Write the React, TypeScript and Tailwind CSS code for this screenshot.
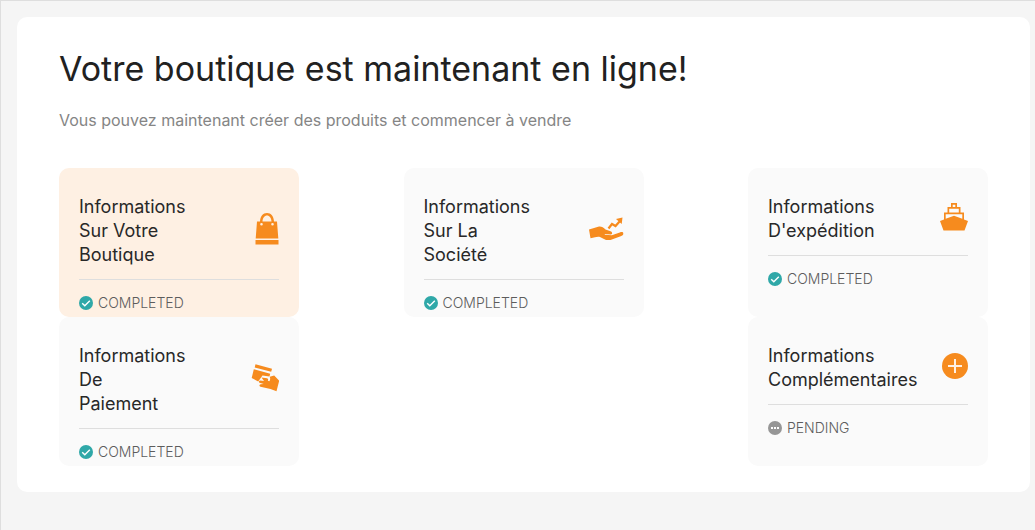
import type { ReactNode } from 'react';

type Status = 'COMPLETED' | 'PENDING';

interface Step {
  id: string;
  lines: string[];
  icon: ReactNode;
  status: Status;
  active?: boolean;
}

const BagIcon = () => (
  <svg width="24" height="32" viewBox="0 0 24 32" fill="#f68b1e" aria-hidden="true">
    <path
      fillRule="evenodd"
      d="M2 8.5h3C5.2 3.3 8 0 12 0s6.8 3.3 7 8.5h3L23.3 25.5H.7zM7.5 8.5h9C16.3 5 14.5 2.6 12 2.6S7.7 5 7.5 8.5zM6.5 10a1.3 1.3 0 1 0 0 2.6 1.3 1.3 0 0 0 0-2.6zM17.5 10a1.3 1.3 0 1 0 0 2.6 1.3 1.3 0 0 0 0-2.6z"
    />
    <path d="M.5 27h23v4.5H.5z" />
  </svg>
);

const HandIcon = () => (
  <svg width="36" height="24" viewBox="0 0 36 24" fill="#f68b1e" aria-hidden="true">
    <path d="M1 12.500 11 9.500c2.500-.3 4.400 1 6.500 3l5 1.700c2 .6 2.300 3 .3 3.300l-6-.5v.8l7 .5 8-2.800c2-.7 3.400-.5 3.500.9.1 1.400-1 2.300-2.600 2.800L22.500 23h-4.500l-6-3c-1.500-.5-3-.3-5 .2l-4.500 1z" />
    <path
      d="m20.500 11.500 3.500-4.500 3.500 2 4.500-5"
      fill="none"
      stroke="#f68b1e"
      strokeWidth="2.2"
    />
    <path d="m28 2 6.500-1.500-.8 6.500z" />
  </svg>
);

const ShipIcon = () => (
  <svg width="28" height="28" viewBox="0 0 28 28" fill="#f68b1e" aria-hidden="true">
    <path
      fillRule="evenodd"
      d="M11 0h6v4h3.500v5.500H24v7l4 1.500-3.500 9.500h-21L0 18l4-1.500v-7h3.500V4H11zM12.700 1.700V4h2.600V1.700zM9.200 5.700v3.800h9.600V5.700zM5.700 11.200v4.600l8.300-3 8.300 3v-4.600z"
    />
  </svg>
);

const PaymentIcon = () => (
  <svg width="28" height="28" viewBox="0 0 28 28" fill="#f68b1e" aria-hidden="true">
    <path d="M4.500.3 21 4.800l-.8 3L3.700 3.400z" />
    <path d="m2.800 5.200 16.400 4.500-.7 2.700-7-1-4.300 6-6.500-3.400z" />
    <path d="m10.500 13.500 5.500.8c1.200.4 1.500 1.400.8 2.400l1.600.6c1-1.500 1-3.300.3-4.500l4.500-1.200 5 5-2.700 10.600-6-2.200-10-2.200c-1.500-.6-1.300-2.300.2-2.600l3-.2-4.200-1.200c-1-.7-.8-2 .5-2.200l4 .4z" />
  </svg>
);

const PlusIcon = () => (
  <svg width="26" height="26" viewBox="0 0 26 26" aria-hidden="true">
    <circle cx="13" cy="13" r="13" fill="#f68b1e" />
    <path d="M13 6v14M6 13h14" stroke="#fff0e3" strokeWidth="2" />
  </svg>
);

const StatusIcon = ({ status }: { status: Status }) =>
  status === 'COMPLETED' ? (
    <svg width="14" height="14" viewBox="0 0 14 14" aria-hidden="true">
      <circle cx="7" cy="7" r="7" fill="#2fa8a8" />
      <path d="m3.200 7.200 2.600 2.600 5-5" fill="none" stroke="#fff" strokeWidth="1.4" />
    </svg>
  ) : (
    <svg width="14" height="14" viewBox="0 0 14 14" aria-hidden="true">
      <circle cx="7" cy="7" r="7" fill="#969696" />
      <path d="M3 6h2v2H3zM6 6h2v2H6zM9 6h2v2H9z" fill="#fff" />
    </svg>
  );

const steps: Step[] = [
  { id: 'shop', lines: ['Informations', 'Sur Votre', 'Boutique'], icon: <BagIcon />, status: 'COMPLETED', active: true },
  { id: 'company', lines: ['Informations', 'Sur La', 'Société'], icon: <HandIcon />, status: 'COMPLETED' },
  { id: 'shipping', lines: ['Informations', "D'expédition"], icon: <ShipIcon />, status: 'COMPLETED' },
  { id: 'payment', lines: ['Informations', 'De', 'Paiement'], icon: <PaymentIcon />, status: 'COMPLETED' },
  { id: 'extra', lines: ['Informations', 'Complémentaires'], icon: <PlusIcon />, status: 'PENDING' },
];

function StepCard({ step }: { step: Step }) {
  return (
    <button
      type="button"
      className={`flex w-60 flex-col rounded-[10px] px-5 pt-[27px] pb-0.5 text-left ${
        step.active ? 'bg-[#fef0e3]' : 'bg-[#fafafa]'
      }`}
    >
      <span className="flex w-full items-center justify-between border-b border-[#dedede] pb-3">
        <span className="text-lg leading-6 text-[#282828]">
          {step.lines.map((line) => (
            <span key={line} className="block">{line}</span>
          ))}
        </span>
        <span className="pb-1">{step.icon}</span>
      </span>
      <span className="mt-[11px] flex items-center gap-[5px] text-sm leading-6 font-light text-[#5c5c5c]">
        <StatusIcon status={step.status} />
        {step.status}
      </span>
    </button>
  );
}

function App() {
  return (
    <div className="min-h-screen border-t border-l border-[#dedede] bg-[#f5f5f5] py-4 pr-[5px] pl-4 font-['Inter',sans-serif]">
      <main className="rounded-[10px] bg-white px-[42px] pt-7 pb-[26px]">
        <h1 className="text-[34px] leading-12 text-[#212121]">
          Votre boutique est maintenant en ligne!
        </h1>
        <p className="mt-[15px] text-base leading-6 text-[#858585]">
          Vous pouvez maintenant créer des produits et commencer à vendre
        </p>
        <div className="mt-9 flex flex-wrap justify-between">
          {steps.map((step) => (
            <StepCard key={step.id} step={step} />
          ))}
        </div>
      </main>
    </div>
  );
}

export default App;
